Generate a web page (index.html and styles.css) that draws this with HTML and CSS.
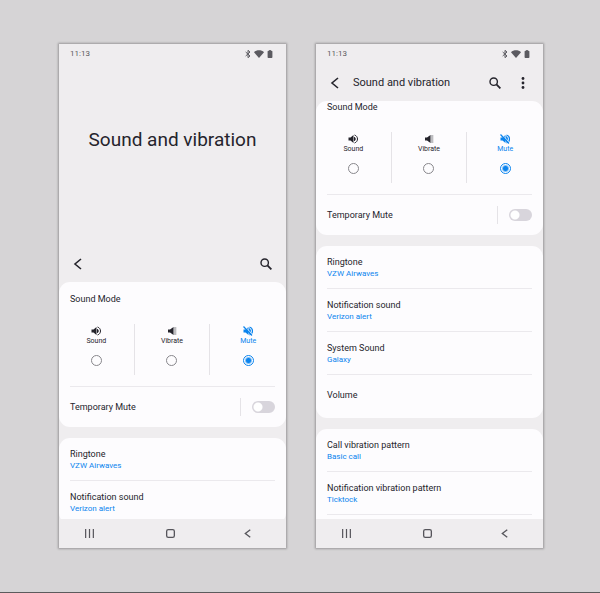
FILE: index.html
```html
<!DOCTYPE html>
<html lang="en">
<head>
<meta charset="utf-8">
<meta name="viewport" content="width=device-width, initial-scale=1">
<title>Sound and vibration</title>
<link rel="stylesheet" href="styles.css">
</head>
<body>
<svg class="sprite" aria-hidden="true">
  <symbol id="bluetooth" viewBox="0 0 24 24"><path d="M5 6l13 12-6 5V1l6 5L5 18" fill="none" stroke="currentColor" stroke-width="3"/></symbol>
  <symbol id="wifi" viewBox="0 0 24 19"><path d="M12 19L0 5C6-1 18-1 24 5z"/></symbol>
  <symbol id="battery" viewBox="0 0 12 20"><path d="M4 0h4v2h2q2 0 2 2v14q0 2-2 2H2q-2 0-2-2V4q0-2 2-2h2z"/></symbol>
  <symbol id="back" viewBox="0 0 12 12"><path d="M9 1L3 6l6 5" fill="none" stroke="currentColor" stroke-width="1.6"/></symbol>
  <symbol id="search" viewBox="0 0 12 12"><circle cx="4.7" cy="4.7" r="3.7" fill="none" stroke="currentColor" stroke-width="1.4"/><path d="M7.4 7.4l4 4" stroke="currentColor" stroke-width="1.8"/></symbol>
  <symbol id="more" viewBox="0 0 12 12"><circle cx="6" cy="1.5" r="1.4"/><circle cx="6" cy="6" r="1.4"/><circle cx="6" cy="10.5" r="1.4"/></symbol>
  <symbol id="sound" viewBox="0 0 20 20"><path d="M1 7h4l6-5v16l-6-5H1z"/><path d="M13 6.500q3.500 3.500 0 7zM13 2c8 2.500 8 13.500 0 16" fill="none" stroke="currentColor" stroke-width="2"/></symbol>
  <symbol id="vibrate" viewBox="0 0 20 20"><path d="M2 7h4l7-5v16l-7-5H2z"/><path d="M14.500 2v16M17.500 2v16" fill="none" stroke="currentColor" stroke-width="1.300" opacity=".6"/></symbol>
  <symbol id="mute" viewBox="0 0 20 20"><path d="M1 7h4l6-5v16l-6-5H1z"/><path d="M13 6.500q3.500 3.500 0 7zM13 2c8 2.500 8 13.500 0 16" fill="none" stroke="currentColor" stroke-width="2.400"/><path d="M3 0l17 18" stroke="#fdfcfe" stroke-width="1.600"/><path d="M1 1l17 18" stroke="currentColor" stroke-width="2.400"/></symbol>
  <symbol id="recents" viewBox="0 0 10 10"><path d="M1.500 1v8M5 1v8M8.500 1v8" stroke="currentColor" stroke-width="1.100"/></symbol>
  <symbol id="home" viewBox="0 0 10 10"><rect x="1.500" y="1.500" width="7" height="7" rx="1.500" fill="none" stroke="currentColor" stroke-width="1.200"/></symbol>
  <symbol id="nav-back" viewBox="0 0 10 10"><path d="M7.500 1.500L3 5l4.500 3.500" fill="none" stroke="currentColor" stroke-width="1.200"/></symbol>
</svg>

<main class="stage">
  <section class="phone" aria-label="Expanded header">
    <div class="status">
      <span>11:13</span>
      <span class="status-icons"><svg class="icon"><use href="#bluetooth"/></svg><svg class="icon wide"><use href="#wifi"/></svg><svg class="icon"><use href="#battery"/></svg></span>
    </div>
    <h1 class="hero">Sound and vibration</h1>
    <header class="toolbar">
      <button class="tool" type="button" aria-label="Back"><svg><use href="#back"/></svg></button>
      <span class="toolbar-title"></span>
      <button class="tool" type="button" aria-label="Search"><svg><use href="#search"/></svg></button>
    </header>
    <div class="content">
      <div class="card">
        <h2 class="card-title">Sound Mode</h2>
        <div class="modes" role="radiogroup" aria-label="Sound Mode">
          <label class="mode"><svg><use href="#sound"/></svg><span>Sound</span><input type="radio" name="mode-a"></label>
          <label class="mode"><svg><use href="#vibrate"/></svg><span>Vibrate</span><input type="radio" name="mode-a"></label>
          <label class="mode active"><svg><use href="#mute"/></svg><span>Mute</span><input type="radio" name="mode-a" checked></label>
        </div>
        <div class="temporary">
          <label for="temp-a">Temporary Mute</label>
          <span class="switch-box"><input class="switch" id="temp-a" type="checkbox"></span>
        </div>
      </div>
      <nav class="card">
        <a class="row" href="#"><span>Ringtone</span><small>VZW Airwaves</small></a>
        <a class="row" href="#"><span>Notification sound</span><small>Verizon alert</small></a>
      </nav>
    </div>
    <footer class="navbar">
      <button type="button" aria-label="Recents"><svg><use href="#recents"/></svg></button>
      <button type="button" aria-label="Home"><svg><use href="#home"/></svg></button>
      <button type="button" aria-label="Back"><svg><use href="#nav-back"/></svg></button>
    </footer>
  </section>

  <section class="phone" aria-label="Collapsed header">
    <div class="status">
      <span>11:13</span>
      <span class="status-icons"><svg class="icon"><use href="#bluetooth"/></svg><svg class="icon wide"><use href="#wifi"/></svg><svg class="icon"><use href="#battery"/></svg></span>
    </div>
    <header class="toolbar">
      <button class="tool" type="button" aria-label="Back"><svg><use href="#back"/></svg></button>
      <h1 class="toolbar-title">Sound and vibration</h1>
      <button class="tool" type="button" aria-label="Search"><svg><use href="#search"/></svg></button>
      <button class="tool" type="button" aria-label="More options"><svg><use href="#more"/></svg></button>
    </header>
    <div class="content scrolled">
      <div class="card">
        <h2 class="card-title">Sound Mode</h2>
        <div class="modes" role="radiogroup" aria-label="Sound Mode">
          <label class="mode"><svg><use href="#sound"/></svg><span>Sound</span><input type="radio" name="mode-b"></label>
          <label class="mode"><svg><use href="#vibrate"/></svg><span>Vibrate</span><input type="radio" name="mode-b"></label>
          <label class="mode active"><svg><use href="#mute"/></svg><span>Mute</span><input type="radio" name="mode-b" checked></label>
        </div>
        <div class="temporary">
          <label for="temp-b">Temporary Mute</label>
          <span class="switch-box"><input class="switch" id="temp-b" type="checkbox"></span>
        </div>
      </div>
      <nav class="card">
        <a class="row" href="#"><span>Ringtone</span><small>VZW Airwaves</small></a>
        <a class="row" href="#"><span>Notification sound</span><small>Verizon alert</small></a>
        <a class="row" href="#"><span>System Sound</span><small>Galaxy</small></a>
        <a class="row single" href="#"><span>Volume</span></a>
      </nav>
      <nav class="card continued">
        <a class="row" href="#"><span>Call vibration pattern</span><small>Basic call</small></a>
        <a class="row" href="#"><span>Notification vibration pattern</span><small>Ticktock</small></a>
      </nav>
    </div>
    <footer class="navbar">
      <button type="button" aria-label="Recents"><svg><use href="#recents"/></svg></button>
      <button type="button" aria-label="Home"><svg><use href="#home"/></svg></button>
      <button type="button" aria-label="Back"><svg><use href="#nav-back"/></svg></button>
    </footer>
  </section>
</main>
</body>
</html>
```

FILE: styles.css
```css
* { box-sizing: border-box; }

body {
  margin: 0;
  height: 100vh;
  background: #d6d4d6;
  color: #25242c;
  font-family: Roboto, "Liberation Sans", sans-serif;
  font-size: 9px;
  line-height: 12px;
}

h1, h2 { margin: 0; font-weight: 400; }
svg { display: block; fill: currentColor; }
.sprite { position: absolute; width: 0; height: 0; }

button {
  display: grid;
  place-items: center;
  padding: 0;
  border: 0;
  background: none;
  color: inherit;
}

.stage {
  display: grid;
  grid-template-columns: 1fr 1fr;
  gap: 30px;
  height: 100%;
  padding: 44px 57px 44px 59px;
  border-bottom: 1px solid #5c5b5d;
}

.phone {
  display: flex;
  flex-direction: column;
  min-width: 0;
  min-height: 0;
  background: #efedef;
  box-shadow: 0 0 2px 1px #9b999b;
}

.status {
  display: flex;
  flex: none;
  align-items: center;
  justify-content: space-between;
  height: 20px;
  padding: 0 12px 0 11px;
  color: #5b5a60;
  font-size: 8px;
}

.status-icons { display: flex; align-items: center; gap: 2px; }
.icon { width: 8px; height: 8px; }
.icon.wide { width: 10px; }

.hero {
  display: grid;
  flex: none;
  place-items: center;
  height: 181px;
  padding-bottom: 30px;
  font-size: 19px;
  line-height: 24px;
}

.toolbar {
  display: flex;
  flex: none;
  align-items: center;
  gap: 8px;
  height: 37px;
  padding: 0 10px 0 9px;
}

.toolbar-title { flex: 1; font-size: 11px; line-height: 16px; }
.tool { width: 20px; height: 20px; }
.tool svg { width: 12px; height: 12px; }

.content {
  display: flex;
  flex: 1;
  flex-direction: column;
  gap: 11px;
  min-height: 0;
  overflow: hidden;
}

.card {
  flex: none;
  border-radius: 11px;
  background: #fdfcfe;
}

.scrolled { border-radius: 11px 11px 0 0; }
.scrolled .card:first-child { margin-top: -11px; }

.card-title { padding: 11px; font-size: 9px; line-height: 12px; }

.modes {
  display: grid;
  grid-template-columns: repeat(3, 1fr);
  height: 51px;
  margin: 8px 0 11px;
}

.mode {
  display: flex;
  flex-direction: column;
  align-items: center;
  padding-top: 2px;
  border-right: 1px solid #e5e3e7;
  font-size: 7px;
  line-height: 10px;
}

.mode:last-child { border-right: 0; }
.mode svg { width: 10px; height: 10px; }
.mode.active { color: #0b84ee; }

.mode input {
  width: 11px;
  height: 11px;
  margin: 9px 0 0;
  border: 1px solid #88878c;
  border-radius: 50%;
  appearance: none;
}

.mode input:checked {
  border-color: #0b84ee;
  background: radial-gradient(circle, #0b84ee 2px, transparent 4px);
}

.temporary {
  display: flex;
  align-items: center;
  justify-content: space-between;
  height: 41px;
  margin: 0 11px;
  border-top: 1px solid #ebe9ed;
}

.switch-box {
  display: flex;
  align-items: center;
  height: 18px;
  padding-left: 11px;
  border-left: 1px solid #e5e3e7;
}

.switch {
  width: 23px;
  height: 12px;
  margin: 0;
  border-radius: 6px;
  background: radial-gradient(circle at 6px 6px, #fff 4px, transparent 5px) #d8d5dc;
  appearance: none;
}

.switch:checked { background: radial-gradient(circle at 17px 6px, #fff 4px, transparent 5px) #0b84ee; }

.row {
  display: flex;
  flex-direction: column;
  height: 43px;
  margin: 0 11px;
  padding-top: 10px;
  border-bottom: 1px solid #ebe9ed;
  color: inherit;
  text-decoration: none;
}

.row small { color: #0b84ee; font-size: 8px; line-height: 12px; }
.row.single { justify-content: center; padding: 0 0 2px; }
.row:last-child { border-bottom-color: transparent; }

.continued { flex: 1 0 auto; border-radius: 11px 11px 0 0; }
.continued .row:last-child { border-bottom-color: #ebe9ed; }

.navbar {
  display: grid;
  flex: none;
  grid-template-columns: 61px 1fr 54px;
  height: 29px;
  padding-right: 12px;
  color: #56555b;
}

.navbar svg { width: 11px; height: 11px; }
```
